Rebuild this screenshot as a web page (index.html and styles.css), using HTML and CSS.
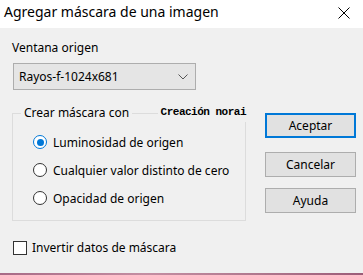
FILE: index.html
```html
<!DOCTYPE html>
<html lang="es">
<head>
  <meta charset="UTF-8">
  <title>Agregar máscara de una imagen</title>
  <link rel="stylesheet" href="styles.css">
</head>
<body>

  <div class="window">
    <div class="titlebar">
      <span class="title">Agregar máscara de una imagen</span>
      <svg class="close" width="12" height="12" viewBox="0 0 12 12">
        <path d="M0.5 0.5 L11.5 11.5 M11.5 0.5 L0.5 11.5" stroke="#000" stroke-width="1" fill="none"/>
      </svg>
    </div>

    <div class="content">
      <div class="main-row">
        <div class="left">
          <div class="label">Ventana origen</div>
          <div class="select">
            <span>Rayos-f-1024x681</span>
            <svg width="10" height="6" viewBox="0 0 10 6">
              <path d="M0.5 0.5 L5 5 L9.5 0.5" stroke="#555" stroke-width="1" fill="none"/>
            </svg>
          </div>

          <fieldset class="group">
            <legend>Crear máscara con</legend>
            <span class="stamp">Creación norai</span>
            <label class="radio-row"><span class="radio checked"></span>Luminosidad de origen</label>
            <label class="radio-row"><span class="radio"></span>Cualquier valor distinto de cero</label>
            <label class="radio-row"><span class="radio"></span>Opacidad de origen</label>
          </fieldset>
        </div>

        <div class="buttons">
          <button class="btn default">Aceptar</button>
          <button class="btn">Cancelar</button>
          <button class="btn">Ayuda</button>
        </div>
      </div>

      <label class="check-row"><span class="checkbox"></span>Invertir datos de máscara</label>
    </div>

    <div class="bottom-line"></div>
  </div>

</body>
</html>
```

FILE: styles.css
```css
html, body {
  margin: 0;
  padding: 0;
}

body {
  font-family: "Noto Sans", sans-serif;
  font-size: 12px;
  color: #000;
  background-color: #f0f0f0;
}

.window {
  width: 363px;
  height: 275px;
  display: flex;
  flex-direction: column;
}

.titlebar {
  height: 28px;
  background-color: #fff;
  display: flex;
  justify-content: space-between;
  align-items: flex-start;
  padding: 0 13px 0 4px;
  box-sizing: border-box;
}

.title {
  font-size: 14px;
  line-height: 24px;
}

.close {
  margin-top: 7px;
}

.content {
  flex: 1;
  background-color: #f0f0f0;
  padding: 11px 7px 0 12px;
}

.main-row {
  display: flex;
  justify-content: space-between;
}

.left {
  width: 234px;
}

.label {
  line-height: 18px;
}

.select {
  width: 183px;
  height: 27px;
  margin: 6px 0 0 1px;
  box-sizing: border-box;
  border: 1px solid #adadad;
  background-color: #e5e5e5;
  display: flex;
  align-items: center;
  justify-content: space-between;
  padding: 0 7px 0 5px;
}

.group {
  position: relative;
  margin: 15px 0 0 0;
  padding: 7px 0 10px 20px;
  border: 1px solid #dcdcdc;
  height: 116px;
  box-sizing: border-box;
}

.group legend {
  margin-left: -12px;
  padding: 0 3px;
  line-height: 16px;
}

.stamp {
  position: absolute;
  top: -15px;
  right: -2px;
  padding: 0 1px 4px 3px;
  background-color: #f0f0f0;
  font-family: "Liberation Mono", monospace;
  font-weight: bold;
  font-size: 11px;
  line-height: 12px;
  letter-spacing: -0.5px;
}

.radio-row {
  display: flex;
  align-items: center;
  height: 28px;
}

.radio {
  width: 14px;
  height: 14px;
  box-sizing: border-box;
  border: 1px solid #333;
  border-radius: 50%;
  background-color: #fff;
  margin-right: 6px;
  position: relative;
}

.radio.checked {
  border-color: #0078d7;
}

.radio.checked::after {
  content: "";
  position: absolute;
  left: 2.5px;
  top: 2.5px;
  width: 7px;
  height: 7px;
  border-radius: 50%;
  background-color: #0078d7;
}

.buttons {
  width: 91px;
  display: flex;
  flex-direction: column;
  padding-top: 74px;
}

.btn {
  height: 25px;
  font-family: "Noto Sans", sans-serif;
  font-size: 12px;
  background-color: #e1e1e1;
  border: 1px solid #adadad;
  padding: 0;
  margin-bottom: 11px;
}

.btn.default {
  border: 2px solid #0078d7;
  margin-bottom: 14px;
}

.check-row {
  display: flex;
  align-items: center;
  margin: 15px 0 0 1px;
}

.checkbox {
  width: 14px;
  height: 14px;
  box-sizing: border-box;
  border: 1px solid #333;
  background-color: #fff;
  margin-right: 5px;
}

.bottom-line {
  height: 2px;
  background: linear-gradient(90deg, #a86a86, #c48ea2 40%, #b0788e 70%, #9c5c78);
}
```
